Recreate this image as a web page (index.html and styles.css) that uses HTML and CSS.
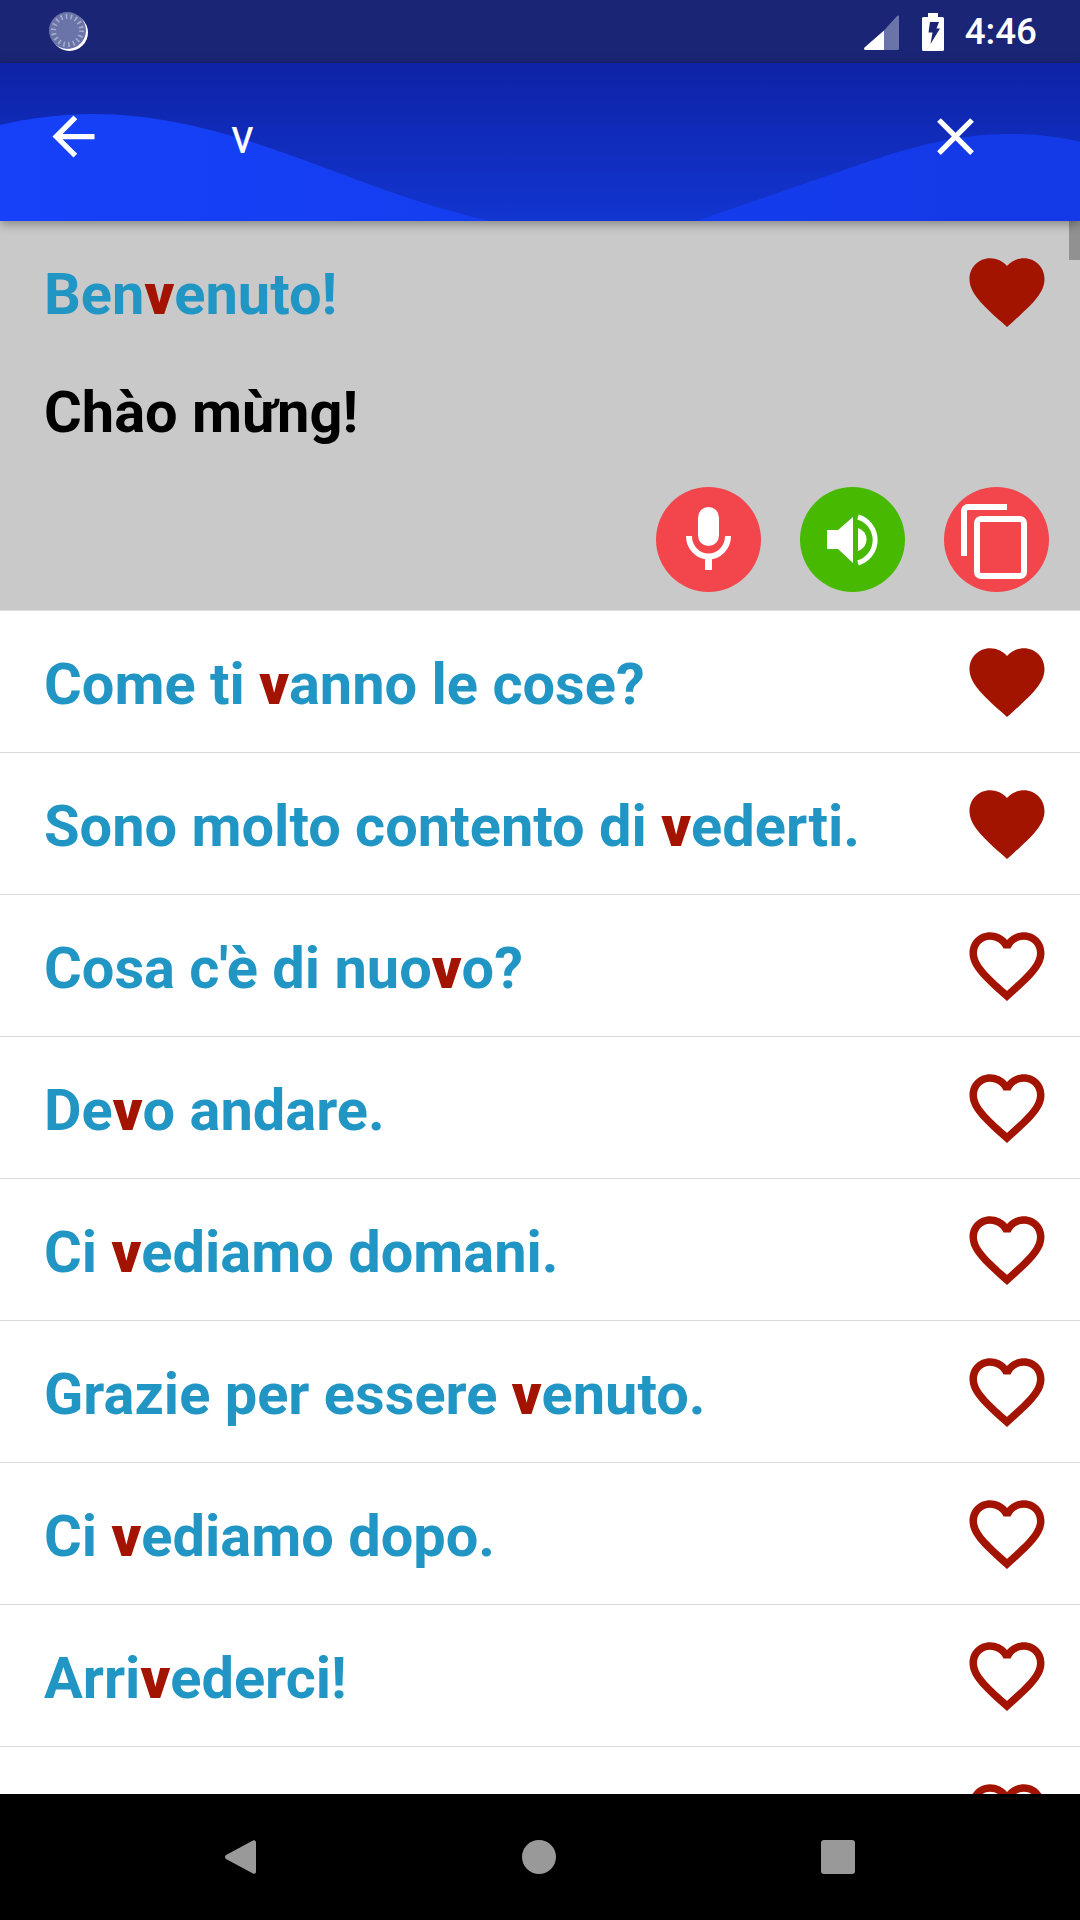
FILE: index.html
```html
<!DOCTYPE html>
<html lang="it">
<head>
  <meta charset="UTF-8" />
  <meta name="viewport" content="width=device-width, initial-scale=1" />
  <title>Frasi</title>
  <link rel="stylesheet" href="styles.css">
</head>
<body>
<svg class="defs" width="0" height="0">
  <linearGradient id="wave-fill" x1="0" x2="1" y1="0" y2="0">
    <stop offset="0" stop-color="#1641f8"/>
    <stop offset="1" stop-color="#1439e6"/>
  </linearGradient>
  <symbol id="heart-full" viewBox="0 0 24 24">
    <path d="M12 21.35l-1.45-1.32C5.4 15.36 2 12.28 2 8.5 2 5.42 4.42 3 7.5 3c1.74 0 3.41.81 4.5 2.09C13.09 3.81 14.76 3 16.5 3 19.58 3 22 5.42 22 8.5c0 3.78-3.4 6.86-8.55 11.54L12 21.35z"/>
  </symbol>
  <symbol id="heart-line" viewBox="0 0 24 24">
    <path d="M16.5 3c-1.74 0-3.41.81-4.5 2.09C10.91 3.81 9.24 3 7.5 3 4.42 3 2 5.42 2 8.5c0 3.78 3.4 6.86 8.55 11.54L12 21.35l1.45-1.32C18.6 15.36 22 12.28 22 8.5 22 5.42 19.58 3 16.5 3zm-4.4 15.55l-.1.1-.1-.1C7.14 14.24 4 11.39 4 8.5 4 6.5 5.5 5 7.5 5c1.54 0 3.04.99 3.57 2.36h1.87C13.46 5.99 14.96 5 16.5 5c2 0 3.5 1.5 3.5 3.5 0 2.89-3.14 5.74-7.9 10.05z"/>
  </symbol>
</svg>

<header class="status-bar">
  <svg class="sync-icon" viewBox="0 0 40 40" width="40" height="40">
    <circle cx="20.5" cy="20.5" r="18.5" fill="#fff"/>
    <circle cx="18.5" cy="18.5" r="18.5" fill="#6a74a8"/>
    <circle cx="18.5" cy="18.5" r="14" fill="none" stroke="#a5abcb" stroke-width="5" stroke-dasharray="1.6 3.3"/>
  </svg>
  <div class="status-right">
    <svg class="signal" viewBox="0 0 35 35" width="35" height="35">
      <path d="M20 15.5V35H1.500a1.400 1.400 0 0 1-1-2.400z" fill="#fff"/>
      <path d="M20 15.5L33 1a1.100 1.100 0 0 1 2 .8V33.500a1.500 1.500 0 0 1-1.500 1.500H20z" fill="#6a74a8"/>
    </svg>
    <svg class="battery" viewBox="0 0 22 38" width="22" height="38">
      <path d="M6 0h10v4h4.500a1.500 1.500 0 0 1 1.500 1.500V36.500a1.500 1.500 0 0 1-1.500 1.500H1.500A1.500 1.500 0 0 1 0 36.500V5.500A1.500 1.500 0 0 1 1.500 4H6z" fill="#fff"/>
      <path d="M8 9h9l-2.500 6.500H18L8.500 31l2-11.500H6.500z" fill="#1a2575"/>
    </svg>
    <span class="clock">4:46</span>
  </div>
</header>

<div class="toolbar">
  <svg class="wave" viewBox="0 0 1080 158" preserveAspectRatio="none">
    <path d="M0 62C30 55 60 51 93 51C180 51 260 80 344 112C400 133 450 150 500 160H690C750 140 800 122 873 97C920 81 965 71 1007 71C1035 71 1060 74 1080 79V158H0z" fill="url(#wave-fill)"/>
  </svg>
  <svg class="tool-icon" viewBox="0 0 24 24"><path d="M20 11H7.830l5.590-5.590L12 4l-8 8 8 8 1.410-1.410L7.830 13H20v-2z"/></svg>
  <span class="search-text">v</span>
  <svg class="tool-icon" viewBox="0 0 24 24"><path d="M19 6.410L17.590 5 12 10.590 6.410 5 5 6.410 10.590 12 5 17.590 6.410 19 12 13.410 17.590 19 19 17.590 13.410 12z"/></svg>
</div>

<main class="content">
  <div class="scroll-thumb"></div>

  <section class="selected">
    <div class="selected-top">
      <p class="phrase">Ben<b>v</b>enuto!</p>
      <svg class="heart"><use href="#heart-full"/></svg>
    </div>
    <p class="translation">Chào mừng!</p>
    <div class="actions">
      <svg class="action red" viewBox="0 0 105 105">
        <rect x="42" y="20" width="21" height="39" rx="10.500" fill="#fff"/>
        <path d="M33 49a19.500 20.500 0 0 0 39 0" fill="none" stroke="#fff" stroke-width="6"/>
        <rect x="49" y="70" width="7" height="13" fill="#fff"/>
      </svg>
      <svg class="action green" viewBox="0 0 105 105">
        <path d="M27 43H38L53 30V76L38 62H27z" fill="#fff"/>
        <path d="M58 41a12 12 0 0 1 0 23z" fill="#fff"/>
        <path d="M58 30a24 24 0 0 1 0 46" fill="none" stroke="#fff" stroke-width="5"/>
      </svg>
      <svg class="action red" viewBox="0 0 105 105">
        <path d="M20 69V24a4 4 0 0 1 4-4H63" fill="none" stroke="#fff" stroke-width="6"/>
        <rect x="33" y="32" width="47" height="57" rx="4" fill="none" stroke="#fff" stroke-width="6"/>
      </svg>
    </div>
  </section>

  <ul class="phrases">
    <li><p class="phrase">Come ti <b>v</b>anno le cose?</p><svg class="heart"><use href="#heart-full"/></svg></li>
    <li><p class="phrase">Sono molto contento di <b>v</b>ederti.</p><svg class="heart"><use href="#heart-full"/></svg></li>
    <li><p class="phrase">Cosa c'è di nuo<b>v</b>o?</p><svg class="heart"><use href="#heart-line"/></svg></li>
    <li><p class="phrase">De<b>v</b>o andare.</p><svg class="heart"><use href="#heart-line"/></svg></li>
    <li><p class="phrase">Ci <b>v</b>ediamo domani.</p><svg class="heart"><use href="#heart-line"/></svg></li>
    <li><p class="phrase">Grazie per essere <b>v</b>enuto.</p><svg class="heart"><use href="#heart-line"/></svg></li>
    <li><p class="phrase">Ci <b>v</b>ediamo dopo.</p><svg class="heart"><use href="#heart-line"/></svg></li>
    <li><p class="phrase">Arri<b>v</b>ederci!</p><svg class="heart"><use href="#heart-line"/></svg></li>
    <li><svg class="heart push"><use href="#heart-line"/></svg></li>
  </ul>
</main>

<nav class="nav-bar">
  <svg class="nav-icon" viewBox="0 0 34 34"><path d="M3 15L30 .5a2 2 0 0 1 3 1.500V32a2 2 0 0 1-3 1.500L3 19a2.500 2.500 0 0 1 0-4z"/></svg>
  <svg class="nav-icon" viewBox="0 0 34 34"><circle cx="17" cy="17" r="17"/></svg>
  <svg class="nav-icon" viewBox="0 0 34 34"><rect width="34" height="34" rx="3"/></svg>
</nav>
</body>
</html>
```

FILE: styles.css
```css
/* Base */
* {
  box-sizing: border-box;
}
body {
  margin: 0;
  width: 1080px;
  height: 1920px;
  display: flex;
  flex-direction: column;
  overflow: hidden;
  font-family: Roboto, sans-serif;
  background: #fff;
}
p {
  margin: 0;
}
.defs {
  position: absolute;
}

/* Status bar */
.status-bar {
  height: 63px;
  flex: none;
  background: #1a2575;
  display: flex;
  align-items: center;
  justify-content: space-between;
  padding: 0 43px 0 49px;
}
.status-right {
  display: flex;
  align-items: center;
}
.signal {
  margin: 2px 23px 0 0;
}
.battery {
  margin-right: 21px;
}
.clock {
  color: #fff;
  font-size: 36.75px;
  font-weight: 500;
}

/* Toolbar */
.toolbar {
  position: relative;
  z-index: 2;
  height: 158px;
  flex: none;
  display: flex;
  align-items: center;
  padding: 0 93px 11px 42px;
  background: linear-gradient(#0e23a6, #1235d0);
  box-shadow: 0 3px 10px rgba(0, 0, 0, 0.35);
}
.wave {
  position: absolute;
  left: 0;
  top: 0;
  width: 100%;
  height: 100%;
}
.tool-icon {
  position: relative;
  width: 63px;
  height: 63px;
  flex: none;
  fill: #fff;
}
.search-text {
  position: relative;
  flex: 1;
  margin-left: 126px;
  color: #fff;
  font-size: 47.25px;
}

/* Content */
.content {
  position: relative;
  flex: 1;
  min-height: 0;
  overflow: hidden;
}
.scroll-thumb {
  position: absolute;
  z-index: 1;
  top: 0;
  right: 0;
  width: 11px;
  height: 39px;
  background: #919191;
}
.phrase {
  flex: 1;
  padding-top: 4px;
  color: #2196c4;
  font-size: 57.75px;
  font-weight: 700;
  line-height: 68px;
}
.phrase b {
  color: #a31400;
}
.heart {
  width: 90px;
  height: 90px;
  flex: none;
  fill: #a31400;
}

/* Selected phrase */
.selected {
  height: 390px;
  padding: 26px 28px 0 44px;
  background: #c9c9c9;
  border-bottom: 1px solid #dedede;
}
.selected-top {
  display: flex;
  align-items: center;
}
.translation {
  margin-top: 41px;
  color: #000;
  font-size: 57.75px;
  font-weight: 700;
  line-height: 68px;
}
.actions {
  display: flex;
  justify-content: flex-end;
  gap: 39px;
  margin-top: 41px;
  margin-right: 3px;
}
.action {
  width: 105px;
  height: 105px;
  border-radius: 50%;
}
.red {
  background: #f2464c;
}
.green {
  background: #46b900;
}

/* List */
.phrases {
  list-style: none;
  margin: 0;
  padding: 0;
}
.phrases li {
  height: 142px;
  display: flex;
  align-items: center;
  padding: 0 28px 0 44px;
  border-bottom: 1px solid #d9d9d9;
}
.push {
  margin-left: auto;
}

/* Navigation bar */
.nav-bar {
  height: 126px;
  flex: none;
  background: #000;
  display: flex;
  align-items: center;
  justify-content: space-between;
  padding: 0 225px 0 223px;
  position: relative;
  z-index: 2;
}
.nav-icon {
  width: 34px;
  height: 34px;
  fill: #999;
}
```
